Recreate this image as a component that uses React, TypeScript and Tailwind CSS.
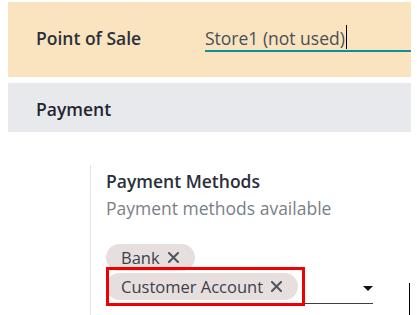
function Cross() {
  return (
    <svg width="11" height="11" viewBox="0 0 11 11" className="shrink-0">
      <path d="M1 1 L10 10 M10 1 L1 10" stroke="#50555d" strokeWidth="2" strokeLinecap="square" />
    </svg>
  );
}

function Tag({ label }: { label: string }) {
  return (
    <span className="inline-flex items-center h-[27px] pl-[15px] pr-[16px] rounded-full bg-[#e7dfde] text-[#3b414b] text-[16.5px] leading-[24px]">
      {label}
      <span className="ml-[8px]">
        <Cross />
      </span>
    </span>
  );
}

export default function App() {
  return (
    <div className="w-[417px] h-[315px] overflow-hidden bg-white pt-[2px] pl-[8px] pr-[6px] font-['Open_Sans',sans-serif] text-[#374151]">
      <div className="h-[75px] bg-[#f9e4bf] flex items-start pt-[24px] pl-[28px]">
        <span className="w-[169px] text-[17.5px] leading-[24px] font-semibold text-[#2b303a]">Point of Sale</span>
        <div className="flex-1 h-[26px] border-b-2 border-[#0f8f9a] flex items-start">
          <span className="text-[17.5px] leading-[24px] text-[#4a4f57]">Store1 (not used)</span>
          <span className="w-[1px] h-[24px] -mt-[1px] bg-black ml-[1px]" />
        </div>
      </div>
      <div className="h-[49px] mt-[6px] bg-[#e8e9ed] pt-[14px] pl-[28px]">
        <span className="text-[17.5px] leading-[24px] font-semibold text-[#1f2630]">Payment</span>
      </div>
      <div className="flex">
        <div className="ml-[82px] mt-[33px] border-l border-[#e2e3e6] pl-[15px] pt-[4px] h-[200px]">
          <div className="text-[17.5px] font-semibold text-[#2b303a] leading-[24px]">Payment Methods</div>
          <div className="text-[17.5px] text-[#7a7f87] leading-[24px] mt-[3px]">Payment methods available</div>
          <div className="mt-[24px] flex">
            <Tag label="Bank" />
          </div>
          <div className="relative flex items-end w-[267px] mt-[2px] pb-[3px] border-b border-[#3a3f47]">
            <Tag label="Customer Account" />
            <div className="flex-1" />
            <span className="mb-[9px] w-0 h-0 border-l-[5px] border-r-[5px] border-t-[5px] border-l-transparent border-r-transparent border-t-[#111]" />
            <div className="absolute left-0 top-[-6px] w-[199px] h-[39px] border-[3px] border-[#f00000]" />
          </div>
        </div>
        <div className="flex-1" />
        <div className="mt-[151px] mr-[1px] w-[1px] h-[40px] bg-black" />
      </div>
    </div>
  );
}
